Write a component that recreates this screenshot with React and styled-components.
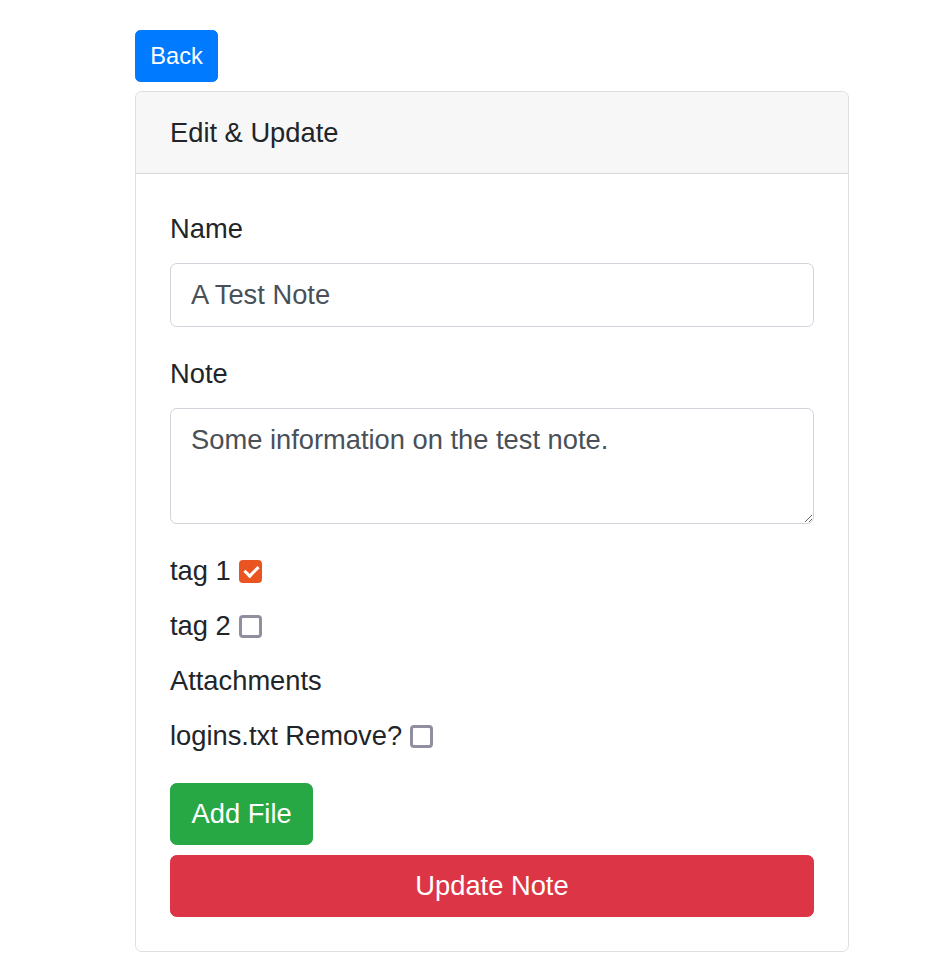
import React from "react";
import styled, { createGlobalStyle } from "styled-components";

const GlobalStyle = createGlobalStyle`
  body {
    margin: 0;
    background: #ffffff;
    font-family: "Liberation Sans", Arial, sans-serif;
    color: #212529;
  }
`;

const Page = styled.div`
  padding: 30px 93px 9px 135px;
  display: flex;
  flex-direction: column;
  align-items: flex-start;
`;

const Button = styled.button`
  font-family: inherit;
  font-size: ${(p) => (p.$small ? "23.6px" : "27.3px")};
  line-height: ${(p) => (p.$small ? "35px" : "40px")};
  color: #fff;
  background: ${(p) => p.$bg};
  border: 1px solid ${(p) => p.$bg};
  border-radius: ${(p) => (p.$small ? "5.3px" : "6.7px")};
  padding: ${(p) => (p.$small ? "7.5px 14.3px" : "10px 20.5px")};
  width: ${(p) => (p.$block ? "100%" : "auto")};
  cursor: pointer;
`;

const Card = styled.div`
  margin-top: 9px;
  width: 714px;
  box-sizing: border-box;
  border: 1px solid rgba(0, 0, 0, 0.125);
  border-radius: 6.7px;
  overflow: hidden;
`;

const CardHeader = styled.div`
  background: #f7f7f7;
  border-bottom: 1px solid rgba(0, 0, 0, 0.125);
  padding: 20.5px 34px;
  font-size: 27.3px;
  line-height: 40px;
`;

const CardBody = styled.div`
  padding: 35px 34px 34px;
  display: flex;
  flex-direction: column;
`;

const FormGroup = styled.div`
  display: flex;
  flex-direction: column;
  margin-bottom: 27px;
`;

const Label = styled.label`
  font-size: 27.3px;
  line-height: 40px;
  margin-bottom: 14px;
`;

const fieldStyle = `
  font-family: inherit;
  font-size: 27.3px;
  line-height: 40px;
  color: #495057;
  border: 1px solid #ced4da;
  border-radius: 6.7px;
  padding: 10px 20px;
  box-sizing: border-box;
  width: 100%;
  background: #fff;
  outline: none;
`;

const Input = styled.input`
  ${fieldStyle}
  height: 64px;
`;

const TextArea = styled.textarea`
  ${fieldStyle}
  height: 116px;
  padding-top: 11px;
  resize: vertical;
  display: block;
`;

const Line = styled.label`
  display: flex;
  align-items: center;
  font-size: 27.3px;
  line-height: 40px;
  margin-bottom: ${(p) => p.$gap || "15px"};
`;

const Check = styled.input.attrs({ type: "checkbox" })`
  appearance: none;
  width: 23px;
  height: 23px;
  margin: 0 0 0 8px;
  box-sizing: border-box;
  border: 3px solid #8f8f9d;
  border-radius: 4px;
  background: #fff;
  position: relative;
  &:checked {
    background: #e95420;
    border-color: #e95420;
  }
  &:checked::after {
    content: "";
    position: absolute;
    left: 5px;
    top: 0px;
    width: 6px;
    height: 11px;
    border: solid #fff;
    border-width: 0 3px 3px 0;
    transform: rotate(45deg);
  }
`;

const Actions = styled.div`
  display: flex;
  flex-direction: column;
  align-items: flex-start;
  gap: 10px;
  margin-top: 27px;
`;

const App = () => {
  return (
    <>
      <GlobalStyle />
      <Page>
        <Button $small $bg="#007bff">Back</Button>
        <Card>
          <CardHeader>Edit &amp; Update</CardHeader>
          <CardBody>
            <FormGroup>
              <Label>Name</Label>
              <Input defaultValue="A Test Note" />
            </FormGroup>
            <FormGroup>
              <Label>Note</Label>
              <TextArea defaultValue="Some information on the test note." />
            </FormGroup>
            <Line>
              tag 1<Check defaultChecked />
            </Line>
            <Line>
              tag 2<Check />
            </Line>
            <Line>Attachments</Line>
            <Line $gap="0">
              logins.txt Remove?<Check />
            </Line>
            <Actions>
              <Button $bg="#28a745">Add File</Button>
              <Button $block $bg="#dc3545">Update Note</Button>
            </Actions>
          </CardBody>
        </Card>
      </Page>
    </>
  );
};

export default App;
